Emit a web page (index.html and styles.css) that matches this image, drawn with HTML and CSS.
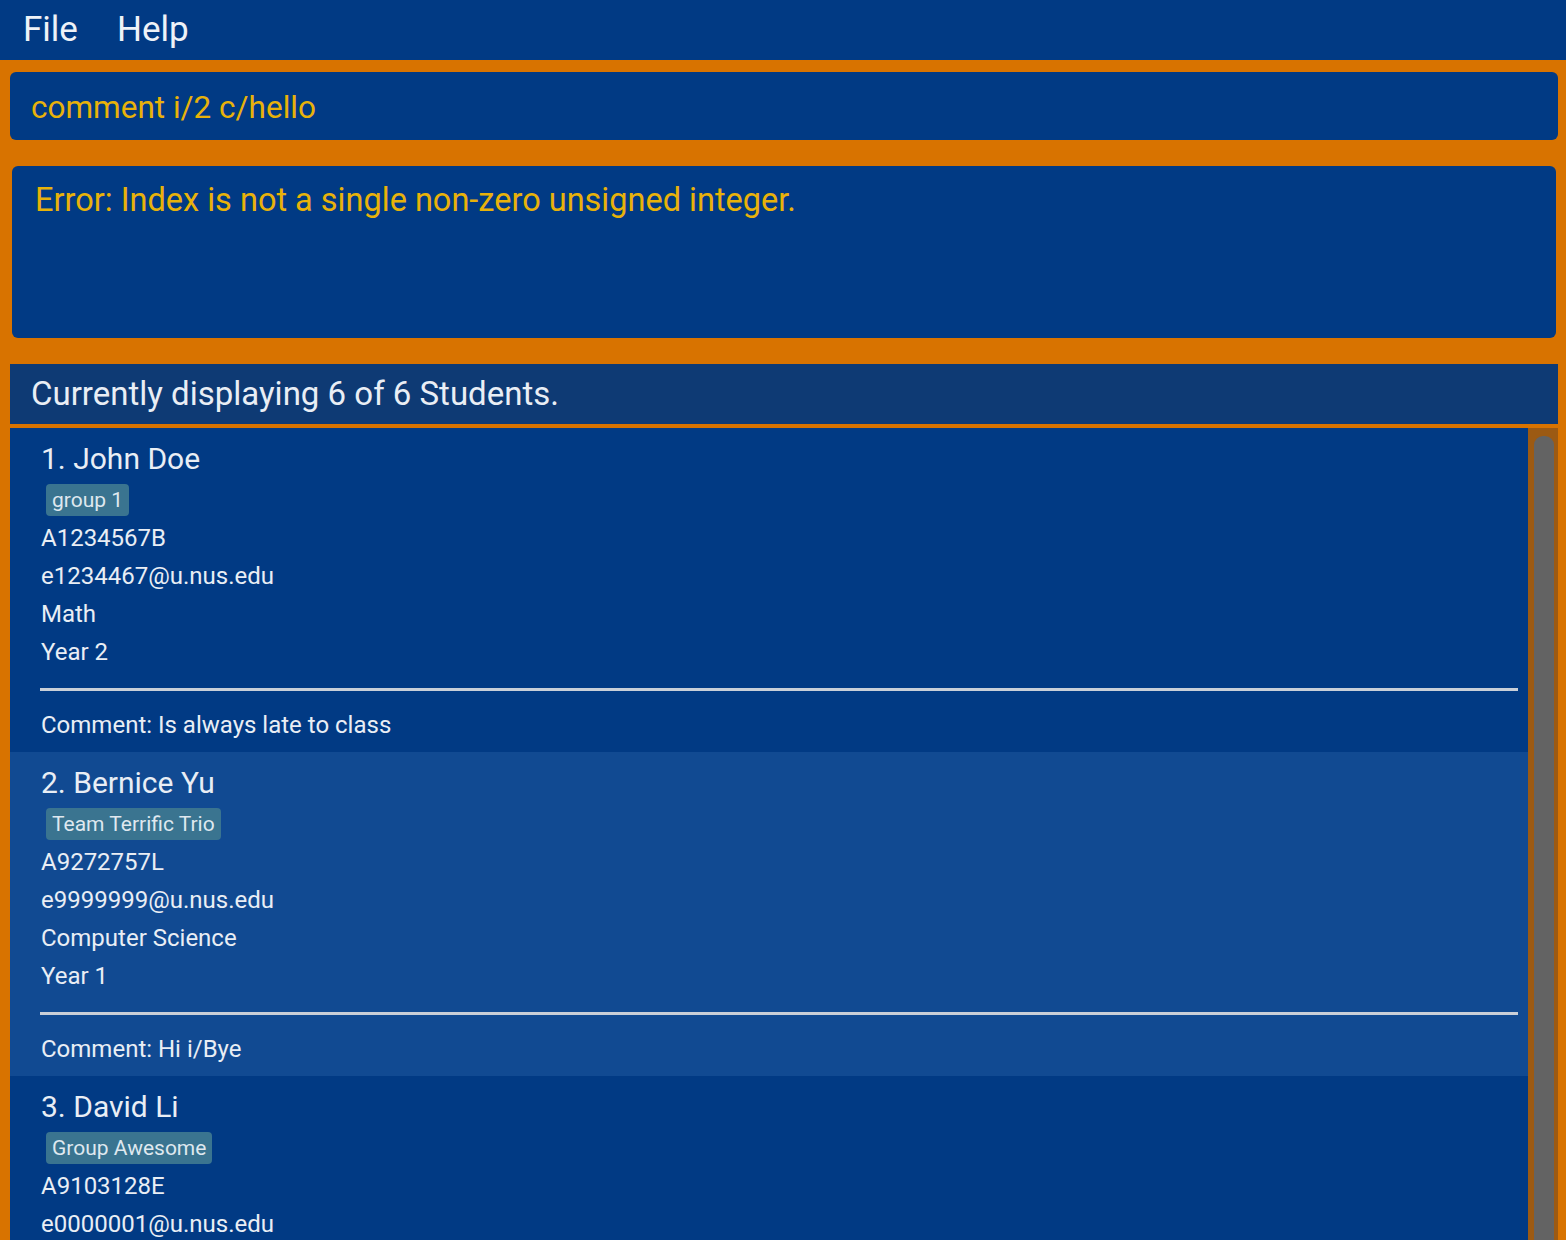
FILE: index.html
```html
<!DOCTYPE html>
<html>
<head>
<meta charset="utf-8">
<link rel="stylesheet" href="styles.css">
</head>
<body>
<div class="menubar">
  <span class="menu-item">File</span>
  <span class="menu-item">Help</span>
</div>
<div class="command-box">comment i/2 c/hello</div>
<div class="result-box">Error: Index is not a single non-zero unsigned integer.</div>
<div class="list-panel">
  <div class="list-header">Currently displaying 6 of 6 Students.</div>
  <div class="list-body">
    <div class="cards">
      <div class="card">
        <div class="name">1. John Doe</div>
        <div class="tags"><span class="tag">group 1</span></div>
        <div class="field">A1234567B</div>
        <div class="field">e1234467@u.nus.edu</div>
        <div class="field">Math</div>
        <div class="field">Year 2</div>
        <div class="separator"></div>
        <div class="field">Comment: Is always late to class</div>
      </div>
      <div class="card alt">
        <div class="name">2. Bernice Yu</div>
        <div class="tags"><span class="tag">Team Terrific Trio</span></div>
        <div class="field">A9272757L</div>
        <div class="field">e9999999@u.nus.edu</div>
        <div class="field">Computer Science</div>
        <div class="field">Year 1</div>
        <div class="separator"></div>
        <div class="field">Comment: Hi i/Bye</div>
      </div>
      <div class="card">
        <div class="name">3. David Li</div>
        <div class="tags"><span class="tag">Group Awesome</span></div>
        <div class="field">A9103128E</div>
        <div class="field">e0000001@u.nus.edu</div>
      </div>
    </div>
    <div class="scroll-track"><div class="scroll-thumb"></div></div>
  </div>
</div>
</body>
</html>
```
FILE: styles.css
```css
html, body {
  margin: 0;
  padding: 0;
}
body {
  background: #d87300;
  font-family: Roboto, "Liberation Sans", sans-serif;
  color: #e9eef5;
  height: 1240px;
  overflow: hidden;
}
.menubar {
  height: 60px;
  background: #013a84;
  display: flex;
  align-items: center;
  padding-left: 23px;
  gap: 39px;
  box-sizing: border-box;
}
.menu-item {
  font-size: 35px;
  color: #eef2f8;
  line-height: 56px;
}
.command-box {
  margin: 12px 8px 0 10px;
  height: 68px;
  background: #013a84;
  border-radius: 6px;
  color: #e8b20a;
  font-size: 31.5px;
  line-height: 68px;
  padding: 2px 0 0 21px;
  box-sizing: border-box;
}
.result-box {
  margin: 26px 10px 0 12px;
  height: 172px;
  background: #013a84;
  border-radius: 6px;
  color: #e8b20a;
  font-size: 32.5px;
  line-height: 40px;
  padding: 14px 0 0 23px;
  box-sizing: border-box;
}
.list-panel {
  margin: 26px 8px 0 10px;
}
.list-header {
  height: 60px;
  background: #0e3a74;
  border-bottom: 4px solid #d87300;
  font-size: 33px;
  line-height: 60px;
  padding-left: 21px;
}
.list-body {
  display: flex;
  height: 812px;
}
.cards {
  flex: 1;
  overflow: hidden;
}
.card {
  background: #013a84;
  padding: 12px 10px 8px 31px;
}
.card.alt {
  background: #114a92;
}
.name {
  font-size: 30px;
  line-height: 38px;
}
.tags {
  display: flex;
  margin: 6px 0 3px 5px;
}
.tag {
  background: #3a7490;
  color: #dfe8ef;
  border-radius: 4px;
  font-size: 21px;
  height: 32px;
  line-height: 32px;
  padding: 0 6px;
}
.field {
  font-size: 24px;
  line-height: 38px;
}
.separator {
  height: 3px;
  background: #c9cfd8;
  margin: 17px 0 15px -1px;
}
.scroll-track {
  width: 30px;
  background: #9c5a13;
  padding: 8px 4px 0 6px;
  box-sizing: border-box;
}
.scroll-thumb {
  width: 20px;
  height: 1200px;
  background: #636363;
  border-radius: 9px;
}
```
